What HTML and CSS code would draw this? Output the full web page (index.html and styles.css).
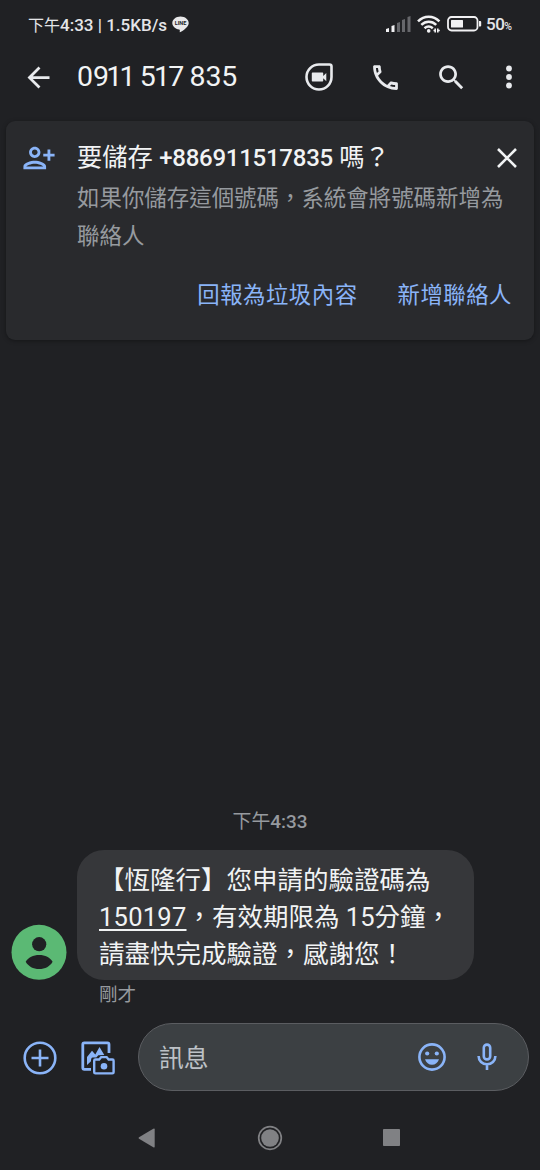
FILE: index.html
```html
<!DOCTYPE html>
<html lang="zh-TW">
<head>
<meta charset="utf-8">
<title>0911 517 835</title>
<link rel="stylesheet" href="styles.css">
</head>
<body>
<div class="phone">
  <div class="status">
    <span class="status-time">下午<b>4:33 | 1.5KB/s</b></span>
    <svg class="line-badge" width="17" height="17" viewBox="0 0 17 17"><path fill="#e8e8ea" d="M8.500.5C4 .5.3 3.400.3 7.100c0 3.200 2.900 5.900 6.800 6.500 1 .2.800.9.600 2.100 0 .5.3.7.8.4 2.500-1.400 5-3.300 6.500-5.100 1.100-1.200 1.700-2.500 1.700-3.900C16.700 3.400 13 .5 8.500.5z"/><text x="8.500" y="9.200" text-anchor="middle" class="line-word">LINE</text></svg>
    <svg class="signal" width="25" height="16" viewBox="0 0 25 16"><path fill="#f1f1f3" d="M0 13l3-1v4H0zM5.500 10l3-1v7h-3z"/><path fill="#66676b" d="M11 7l3-1v10h-3zM16 4l3-1v13h-3zM21.500 1l3-1v16h-3z"/></svg>
    <svg class="wifi" width="24" height="18" viewBox="0 0 24 18" fill="none" stroke="#f1f1f3" stroke-width="2.500"><path d="M1 6.300C7.200.1 16.200.1 22.400 6.300"/><path d="M4.300 9.900c4.500-4.200 10.500-4.200 14.900 0"/><path d="M7.500 13.300c2.600-2.300 5.700-2.300 8.300 0"/><circle cx="11.700" cy="15.900" r="1.800" fill="#f1f1f3" stroke="none"/><path stroke-width="1.600" d="M18.200 13.500v4M20.800 13.500v4M16.500 15.500h1.700M20.800 15.500h2"/></svg>
    <svg class="battery" width="35" height="16" viewBox="0 0 35 16"><rect x="1" y="1" width="29.500" height="13.500" rx="3.500" fill="none" stroke="#f1f1f3" stroke-width="1.800"/><rect x="4" y="4" width="12" height="7.500" rx=".5" fill="#f1f1f3"/><path fill="#f1f1f3" d="M32 5h1.200q1 0 1 1v3.500q0 1-1 1H32z"/></svg>
    <span class="percent">50<small>%</small></span>
  </div>

  <header class="bar">
    <svg class="back" width="33" height="33" viewBox="0 0 24 24"><path fill="#e8eaed" d="M20 11H7.830l5.590-5.590L12 4l-8 8 8 8 1.410-1.410L7.830 13H20v-2z"/></svg>
    <h1 class="number">0<span class="snug">911</span> <span class="near">517</span> 835</h1>
    <svg class="duo" width="28" height="28" viewBox="0 0 28 28"><path fill="none" stroke="#e8eaed" stroke-width="2.600" d="M14 1.500h10.500q2 0 2 2V14A12.500 12.500 0 1 1 14 1.500z"/><path fill="#e8eaed" d="M7.500 9.500h10q.7 0 .7.700v2.700l3.100-3v8.400l-3.100-3v2.500q0 .7-.7.700h-10q-.7 0-.7-.7v-7.600q0-.7.7-.7z"/></svg>
    <svg class="call" width="33" height="33" viewBox="0 0 24 24"><path fill="#e8eaed" d="M6.540 5c.06.89.21 1.760.45 2.590l-1.200 1.200c-.41-1.200-.67-2.470-.76-3.790h1.510m9.860 12.020c.85.24 1.720.39 2.600.45v1.490c-1.320-.09-2.590-.35-3.800-.75l1.200-1.190M7.500 3H4c-.55 0-1 .45-1 1 0 9.390 7.610 17 17 17 .55 0 1-.45 1-1v-3.490c0-.55-.45-1-1-1-1.240 0-2.450-.2-3.570-.57-.1-.04-.21-.05-.31-.05-.26 0-.51.1-.71.29l-2.200 2.200c-2.830-1.450-5.150-3.760-6.590-6.590l2.200-2.200c.28-.28.36-.67.25-1.020C8.700 6.450 8.500 5.250 8.500 4c0-.55-.45-1-1-1z"/></svg>
    <svg class="search" width="33" height="33" viewBox="0 0 24 24"><path fill="#e8eaed" d="M15.500 14h-.79l-.28-.27C15.410 12.590 16 11.110 16 9.500 16 5.910 13.090 3 9.500 3S3 5.910 3 9.500 5.910 16 9.500 16c1.610 0 3.090-.59 4.230-1.570l.27.280v.79l5 4.990L20.490 19l-4.990-5zm-6 0C7.010 14 5 11.990 5 9.500S7.010 5 9.500 5 14 7.010 14 9.500 11.990 14 9.500 14z"/></svg>
    <svg class="more" width="6" height="24" viewBox="0 0 6 24" fill="#e8eaed"><circle cx="3" cy="3.500" r="2.900"/><circle cx="3" cy="12" r="2.900"/><circle cx="3" cy="20.500" r="2.900"/></svg>
  </header>

  <section class="card">
    <svg class="add-person" width="34" height="34" viewBox="0 0 24 24"><path fill="#8ab4f8" d="M13 8c0-2.210-1.790-4-4-4S5 5.790 5 8s1.790 4 4 4 4-1.790 4-4zm-2 0c0 1.100-.9 2-2 2s-2-.9-2-2 .9-2 2-2 2 .9 2 2zM1 18v2h16v-2c0-2.660-5.330-4-8-4s-8 1.340-8 4zm2 0c.2-.71 3.300-2 6-2 2.690 0 5.780 1.280 6 2H3zM20 14v-3h3V9h-3V6h-2v3h-3v2h3v3h2z"/></svg>
    <div class="card-text">
      <h2 class="card-title">要儲存 <b>+886911517835</b> 嗎？</h2>
      <p class="card-desc">如果你儲存這個號碼，系統會將號碼新增為<br>聯絡人</p>
      <div class="actions"><span>回報為垃圾內容</span><span>新增聯絡人</span></div>
    </div>
    <svg class="close" width="20" height="20" viewBox="0 0 20 20"><path stroke="#f1f3f4" stroke-width="2.600" d="M1 1l18 18M19 1L1 19"/></svg>
  </section>

  <main class="thread">
    <div class="date">下午<b>4:33</b></div>
    <div class="row">
      <svg class="avatar" width="56" height="56" viewBox="0 -.5 56 56"><circle cx="28" cy="27.800" r="27.500" fill="#5bb974"/><g fill="#202124"><circle cx="28.200" cy="19.700" r="7.100"/><path d="M14.700 37.300c2.400-4.200 7.600-6.700 13.500-6.700s11.100 2.500 13.400 6.700c-2.500 4.600-7.500 7.300-13.400 7.300s-10.900-2.700-13.500-7.300z"/></g></svg>
      <div class="bubble"><p>【恆隆行】您申請的驗證碼為</p><p><u>150197</u>，有效期限為 15分鐘，</p><p>請盡快完成驗證，感謝您！</p></div>
    </div>
    <div class="sent">剛才</div>
  </main>

  <div class="composer">
    <svg class="plus" width="34" height="34" viewBox="0 0 34 34" fill="none" stroke="#8ab4f8" stroke-width="2.600"><circle cx="17" cy="17" r="15.300"/><path d="M17 8.500v17M8.500 17h17"/></svg>
    <svg class="gallery" width="34" height="34" viewBox="0 0 34 34" fill="none" stroke="#8ab4f8" stroke-width="2.800"><path d="M28 12V3.400q0-1.500-1.500-1.500H3.300q-1.500 0-1.500 1.500V26.500q0 1.800 1.500 1.800H10"/><path fill="#8ab4f8" stroke="none" d="M6 24v-8l5-6.300 3.300 3.800L18.500 6l4.800 8-6 .3-2 2.300H12c-2 0-2 2-2 3.700z"/><path stroke-width="2.400" d="M14.400 18.500h3.800l2-2.400h5.400l2 2.400h3.800q1.200 0 1.200 1.200v11.500q0 1.200-1.200 1.200h-17q-1.200 0-1.200-1.200V19.700q0-1.200 1.200-1.200z"/><circle cx="23" cy="25.300" r="3.300" fill="#8ab4f8" stroke="none"/></svg>
    <div class="field">
      <span>訊息</span>
      <svg class="emoji" width="28" height="28" viewBox="0 0 28 28" fill="#8ab4f8"><circle cx="14" cy="14" r="12.600" fill="none" stroke="#8ab4f8" stroke-width="2.600"/><circle cx="9.200" cy="10.500" r="2.100"/><circle cx="18.800" cy="10.500" r="2.100"/><path d="M7 16.300h14c-1 3.500-3.800 5.500-7 5.500s-6-2-7-5.500z"/></svg>
      <svg class="mic" width="20" height="28" viewBox="0 0 20 28" fill="none" stroke="#8ab4f8" stroke-width="2.600"><rect x="6.800" y="1.600" width="6.400" height="14.800" rx="3.200"/><path d="M1.600 13c0 5 3.800 8.200 8.400 8.200s8.400-3.200 8.400-8.200M10 21v6"/></svg>
    </div>
  </div>

  <nav class="nav">
    <svg width="18" height="20" viewBox="0 0 18 20"><path fill="#808184" d="M1 9.200L15.300.7q1.400-.7 1.400.7v17.200q0 1.400-1.400.7L1 10.800q-1-.8 0-1.600z"/></svg>
    <svg width="26" height="26" viewBox="0 0 26 26"><circle cx="13" cy="13" r="11.300" fill="none" stroke="#808184" stroke-width="1.700"/><circle cx="13" cy="13" r="8.800" fill="#808184"/></svg>
    <svg width="17" height="17" viewBox="0 0 17 17"><rect width="17" height="17" rx=".8" fill="#808184"/></svg>
  </nav>
</div>
</body>
</html>
```
FILE: styles.css
```css
* { box-sizing: border-box; }
body { margin: 0; background: #202124; }
h1, h2, p { margin: 0; font-weight: 400; }
b { font-weight: 500; }
svg { display: block; flex: none; }

.phone {
  width: 540px;
  height: 1170px;
  display: flex;
  flex-direction: column;
  overflow: hidden;
  color: #f1f3f4;
  background: #202124;
  font-family: Roboto, "Noto Sans CJK TC", sans-serif;
  white-space: nowrap;
}

.status { height: 50px; display: flex; align-items: center; padding: 0 0 2px 28px; font-size: 17px; color: #e4e5e8; }
.status-time { width: 144px; padding-bottom: 1px; font-size: 16px; }
.status-time b { font-size: 17px; }
.line-word { font: 700 5.500px Roboto, sans-serif; fill: #202124; }
.signal { margin-left: 197px; }
.wifi { margin-left: 6px; }
.battery { margin-left: 6px; }
.percent { margin-left: 4px; font-weight: 500; letter-spacing: -0.500px; }
.percent small { font-size: 10.500px; }

.bar { height: 54px; display: flex; align-items: center; padding-left: 22px; }
.number { width: 228px; margin-left: 22px; font-size: 28.500px; line-height: 54px; letter-spacing: -0.100px; }
.snug { letter-spacing: -2.700px; }
.near { letter-spacing: -1.800px; }
.call { margin-left: 36px; }
.search { margin-left: 33px; }
.more { margin-left: 38px; }

.card {
  height: 219px;
  margin: 17px 6px 0;
  padding: 20px 0 0 16px;
  display: flex;
  align-items: flex-start;
  border-radius: 9px;
  background: #292a2d;
  box-shadow: 0 1px 4px rgba(0, 0, 0, .35);
}
.card-text { width: 435px; margin-left: 21px; }
.card-title { font-size: 25.300px; line-height: 34px; }
.card-title b { font-size: 24px; letter-spacing: -0.250px; }
.card-desc { margin-top: 4px; font-size: 22.450px; line-height: 38px; color: #969a9f; }
.actions { margin-top: 20px; display: flex; justify-content: flex-end; gap: 40px; font-size: 22.400px; line-height: 40px; letter-spacing: .5px; color: #8ab4f8; }
.close { margin: 7px 0 0 -15.500px; }

.thread { flex: 1; display: flex; flex-direction: column; justify-content: flex-end; }
.date { height: 30px; margin-bottom: 13px; text-align: center; font-size: 18.900px; line-height: 30px; color: #969a9f; }
.row { display: flex; align-items: flex-end; padding-left: 11px; gap: 10px; }
.bubble { width: 397px; height: 130px; padding: 12px 22px 0; border-radius: 27px; background: #36373a; font-size: 25.500px; line-height: 37px; }
.bubble u { letter-spacing: .25px; text-decoration-thickness: 1.500px; text-underline-offset: 3px; }
.sent { height: 28px; padding: 1px 0 0 99px; font-size: 18.500px; line-height: 28px; color: #969a9f; }

.composer { height: 68px; margin-top: 15px; display: flex; align-items: center; padding-left: 23px; }
.plus, .gallery { margin-top: 1px; }
.gallery { margin-left: 24px; }
.field { width: 391px; height: 68px; margin-left: 23px; padding-left: 20px; display: flex; align-items: center; border: 1px solid #5b5d61; border-radius: 34px; background: #3c4043; font-size: 24.800px; color: #bdc1c6; }
.field span { width: 259px; padding-bottom: 2px; }
.mic { margin-left: 31px; }

.nav { height: 79px; padding: 14px 140px 0 138px; display: flex; align-items: center; justify-content: space-between; }
```
